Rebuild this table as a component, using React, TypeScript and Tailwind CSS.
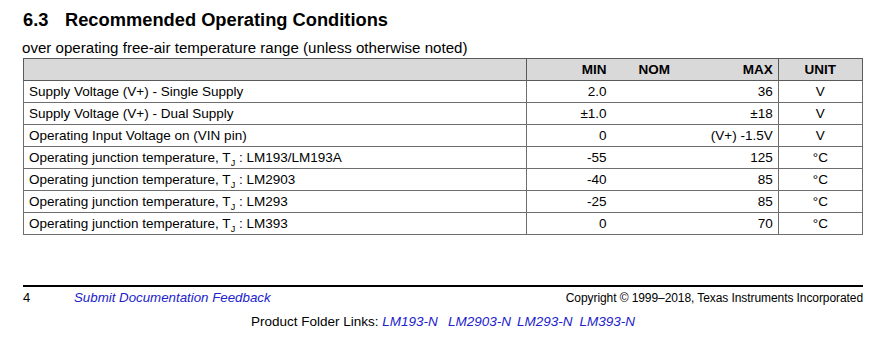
const rows = [
  { label: "Supply Voltage (V+) - Single Supply", min: "2.0", max: "36", unit: "V" },
  { label: "Supply Voltage (V+) - Dual Supply", min: "±1.0", max: "±18", unit: "V" },
  { label: "Operating Input Voltage on (VIN pin)", min: "0", max: "(V+) -1.5V", unit: "V" },
  { label: "LM193/LM193A", tj: true, min: "-55", max: "125", unit: "°C" },
  { label: "LM2903", tj: true, min: "-40", max: "85", unit: "°C" },
  { label: "LM293", tj: true, min: "-25", max: "85", unit: "°C" },
  { label: "LM393", tj: true, min: "0", max: "70", unit: "°C" },
];

function Label({ row }: { row: (typeof rows)[number] }) {
  if (!row.tj) return <>{row.label}</>;
  return (
    <>
      Operating junction temperature, T<sub className="text-[9px] align-[-2px]">J</sub> : {row.label}
    </>
  );
}

export default function App() {
  return (
    <div
      className="w-[892px] h-[361px] bg-white text-black px-[23px] pt-[9px]"
      style={{ fontFamily: '"Liberation Sans", Arial, sans-serif' }}
    >
      <h2 className="text-[18.3px] font-bold leading-[22px] flex">
        <span className="w-[42px]">6.3</span>
        <span>Recommended Operating Conditions</span>
      </h2>
      <p className="text-[15.1px] leading-[18px] mt-[8px] ml-[-1px]">
        over operating free-air temperature range (unless otherwise noted)
      </p>

      <table className="w-[840px] border-collapse text-[13.5px] leading-[21px] mt-[1px]">
        <colgroup>
          <col className="w-[501px]" />
          <col className="w-[85px]" />
          <col className="w-[85px]" />
          <col className="w-[81px]" />
          <col className="w-[84px]" />
        </colgroup>
        <thead>
          <tr className="bg-[#d9d9d9] font-bold h-[22px]">
            <th className="border border-[#5a5a5a]"></th>
            <th className="border-y border-[#5a5a5a] text-right pr-[5px]">MIN</th>
            <th className="border-y border-[#5a5a5a] text-center">NOM</th>
            <th className="border-y border-r border-[#5a5a5a] text-right pr-[5px]">MAX</th>
            <th className="border border-[#5a5a5a] text-center">UNIT</th>
          </tr>
        </thead>
        <tbody>
          {rows.map((r, i) => (
            <tr key={i} className="h-[22px]">
              <td className="border-l border-r border-b border-[#6e6e6e] pl-[5px]">
                <Label row={r} />
              </td>
              <td className="border-b border-[#6e6e6e] text-right pr-[5px]">{r.min}</td>
              <td className="border-b border-[#6e6e6e]"></td>
              <td className="border-b border-r border-[#6e6e6e] text-right pr-[5px]">{r.max}</td>
              <td className="border-b border-r border-[#6e6e6e] text-center">{r.unit}</td>
            </tr>
          ))}
        </tbody>
      </table>

      <div className="mt-[50px] border-t-2 border-black w-[840px]">
        <div className="flex items-center leading-[20px] pt-[1px]">
          <span className="w-[51px] text-[13px]">4</span>
          <span className="italic text-[13.3px] text-[#2222cc]">Submit Documentation Feedback</span>
          <span className="ml-auto text-[12px] tracking-[-0.08px]">
            Copyright © 1999–2018, Texas Instruments Incorporated
          </span>
        </div>
        <div className="text-center text-[13.5px] leading-[20px] mt-[4px]">
          Product Folder Links:{" "}
          <span className="italic text-[#2222cc]">LM193-N</span>
          <span className="italic text-[#2222cc] ml-[10px]">LM2903-N</span>
          <span className="italic text-[#2222cc] ml-[6px]">LM293-N</span>
          <span className="italic text-[#2222cc] ml-[7px]">LM393-N</span>
        </div>
      </div>
    </div>
  );
}
